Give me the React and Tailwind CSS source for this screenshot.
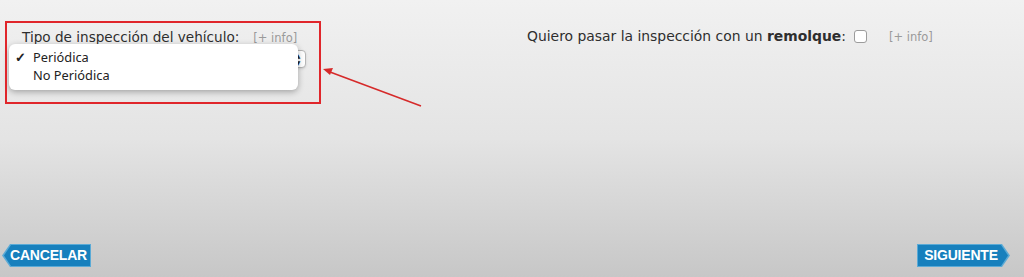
import React from 'react';

const Info = () => (
  <span className="text-[11.5px] text-[#9a9a9a] font-['DejaVu_Sans',sans-serif]">[+ info]</span>
);

const App = () => {
  return (
    <div className="relative w-[1024px] h-[277px] overflow-hidden bg-gradient-to-b from-[#f1f1f1] via-[#e4e4e4] to-[#c7c7c7] font-['DejaVu_Sans',sans-serif] text-[#2e2e2e]">
      <div className="flex flex-col justify-between h-full">
        {/* fila superior */}
        <div className="flex pt-[27px]">
          <div className="relative w-[520px] pl-[22px]">
            <div className="flex items-baseline gap-[14px]">
              <span className="text-[13.6px]">Tipo de inspección del vehículo:</span>
              <Info />
            </div>
            {/* select con stepper */}
            <div className="absolute left-[290px] top-[23px] w-[16px] h-[18px] rounded-[4px] bg-white border border-[#b5b5b5] shadow-sm flex flex-col items-center justify-center gap-[1px]">
              <span className="text-[6px] leading-[6px] text-[#222]">▲</span>
              <span className="text-[6px] leading-[6px] text-[#222]">▼</span>
            </div>
            {/* menú desplegado */}
            <div className="absolute left-[9px] top-[17px] w-[289px] h-[46px] rounded-[6px] bg-white shadow-[0_2px_6px_rgba(0,0,0,0.3)] pt-[5px] text-[12.8px] text-[#222] font-['Noto_Sans',sans-serif]">
              <div className="flex items-center h-[18px]">
                <span className="w-[24px] pl-[6px] text-[13px] font-bold">✓</span>
                <span>Periódica</span>
              </div>
              <div className="flex items-center h-[18px] pl-[24px]">No Periódica</div>
            </div>
          </div>
          <div className="flex items-center pl-[7px] h-[18px]">
            <span className="text-[13.9px]">
              Quiero pasar la inspección con un <b>remolque</b>:
            </span>
            <span className="ml-[8px] w-[13px] h-[13px] rounded-[3px] bg-white border border-[#9c9c9c]" />
            <span className="ml-[22px]"><Info /></span>
          </div>
        </div>

        {/* fila inferior */}
        <div className="flex justify-between items-center px-[2px] pb-[10px]">
          <div className="w-[89px] h-[23px] bg-[#5aaad6] [clip-path:polygon(8px_0,100%_0,100%_100%,8px_100%,0_50%)] flex items-center justify-end pr-[1px]">
            <div className="w-[86px] h-[21px] bg-[#1780bd] [clip-path:polygon(7px_0,100%_0,100%_100%,7px_100%,0_50%)] flex items-center justify-center pl-[3px] text-white font-bold text-[14px] font-['Liberation_Sans',sans-serif] tracking-[-0.2px]">
              CANCELAR
            </div>
          </div>
          <div className="mr-[12px] w-[93px] h-[23px] bg-[#5aaad6] [clip-path:polygon(0_0,calc(100%-8px)_0,100%_50%,calc(100%-8px)_100%,0_100%)] flex items-center pl-[1px]">
            <div className="w-[90px] h-[21px] bg-[#1780bd] [clip-path:polygon(0_0,calc(100%-7px)_0,100%_50%,calc(100%-7px)_100%,0_100%)] flex items-center justify-center pr-[4px] text-white font-bold text-[14px] font-['Liberation_Sans',sans-serif] tracking-[-0.2px]">
              SIGUIENTE
            </div>
          </div>
        </div>
      </div>

      {/* anotación roja */}
      <div className="absolute left-[5px] top-[21px] w-[316px] h-[83px] border-2 border-[#e0262b]" />
      <svg className="absolute left-0 top-0" width="1024" height="277">
        <line x1="421" y1="106" x2="330" y2="72" stroke="#d62a2a" strokeWidth="1.6" />
        <polygon points="323,69 333,68 330,75" fill="#d62a2a" />
      </svg>
    </div>
  );
};

export default App;
